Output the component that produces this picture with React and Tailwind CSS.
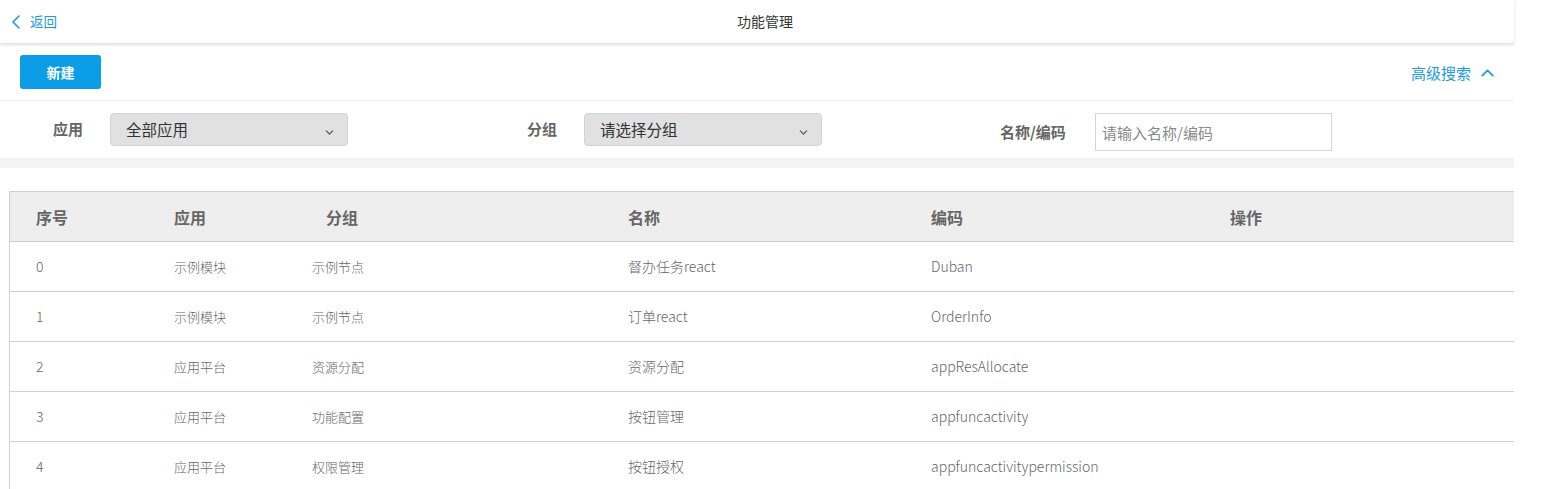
import React from 'react';

const rows = [
  { idx: '0', app: '示例模块', group: '示例节点', name: '督办任务react', code: 'Duban' },
  { idx: '1', app: '示例模块', group: '示例节点', name: '订单react', code: 'OrderInfo' },
  { idx: '2', app: '应用平台', group: '资源分配', name: '资源分配', code: 'appResAllocate' },
  { idx: '3', app: '应用平台', group: '功能配置', name: '按钮管理', code: 'appfuncactivity' },
  { idx: '4', app: '应用平台', group: '权限管理', name: '按钮授权', code: 'appfuncactivitypermission' },
];

const gridCols = 'grid grid-cols-[137px_152px_302px_303px_299px_1fr]';

function Chevron({ dir = 'down', className = '' }) {
  let d = 'M3 5l4 4 4-4';
  if (dir === 'up') d = 'M2 9l5-5 5 5';
  if (dir === 'left') d = 'M9 1L3 7l6 6';
  return (
    <svg viewBox="0 0 14 14" className={className} fill="none" stroke="currentColor" strokeWidth="1.6">
      <path d={d} strokeLinecap="round" strokeLinejoin="round" />
    </svg>
  );
}

function Select({ value }) {
  return (
    <div className="w-[238px] h-[33px] bg-[#e1e1e1] border border-[#d4d4d4] rounded-[4px] flex items-center justify-between pl-[15px] pr-[12px]">
      <span className="text-[15.5px] text-[#333]">{value}</span>
      <Chevron className="w-[11px] h-[11px] text-[#555] mt-[5px]" />
    </div>
  );
}

export default function App() {
  return (
    <div className="w-[1514px] bg-white text-[#333]" style={{ fontFamily: '"Noto Sans CJK SC", "Noto Sans", sans-serif' }}>
      {/* header */}
      <div className="h-[44px] flex items-center relative shadow-[0_1px_3px_rgba(0,0,0,0.12)] border-b border-[#e4e4e4]">
        <div className="flex items-center pl-[10px] text-[#1c9be4] text-[13.5px] gap-[6px]">
          <Chevron dir="left" className="w-[14px] h-[16px]" />
          <span>返回</span>
        </div>
        <div className="absolute left-0 right-0 flex justify-center pl-[16px] text-[14px] text-[#333] pointer-events-none">功能管理</div>
      </div>

      {/* toolbar */}
      <div className="h-[57px] flex items-center justify-between pl-[20px] pr-[19px] border-b border-[#ececec]">
        <button className="w-[81px] h-[34px] bg-[#0b9de6] text-white text-[14px] font-bold rounded-[3px]">新建</button>
        <div className="flex items-center gap-[9px] text-[#1c9be4] text-[15px] pt-[2px]">
          <span>高级搜索</span>
          <Chevron dir="up" className="w-[15px] h-[15px]" />
        </div>
      </div>

      {/* filters */}
      <div className="h-[57px] flex items-center">
        <div className="flex items-center">
          <span className="w-[110px] pl-[53px] text-[15px] font-bold text-[#666]">应用</span>
          <Select value="全部应用" />
        </div>
        <div className="flex items-center ml-[179px]">
          <span className="w-[57px] text-[15px] font-bold text-[#666]">分组</span>
          <Select value="请选择分组" />
        </div>
        <div className="flex items-center ml-[178px] pt-[5px]">
          <span className="w-[95px] text-[15px] font-bold text-[#666]">名称/编码</span>
          <input
            className="w-[237px] h-[38px] border border-[#d5d5d5] px-[6px] text-[15px] placeholder:text-[#888] outline-none"
            placeholder="请输入名称/编码"
          />
        </div>
      </div>

      <div className="h-[10px] bg-[#f3f3f3]" />

      {/* table */}
      <div className="pt-[23px] pl-[9px]">
        <div className="border-l border-[#d0d0d0]">
          <div className={`${gridCols} h-[51px] items-center bg-[#eeeeee] border-y border-[#cfcfcf] text-[16px] font-bold text-[#666]`}>
            <div className="pl-[26px]">序号</div>
            <div className="pl-[27px]">应用</div>
            <div className="pl-[27px]">分组</div>
            <div className="pl-[27px]">名称</div>
            <div className="pl-[27px]">编码</div>
            <div className="pl-[27px]">操作</div>
          </div>
          {rows.map((r) => (
            <div key={r.idx} className={`${gridCols} h-[50px] items-center border-b border-[#d0d0d0] text-[14px] text-[#666] font-light`}>
              <div className="pl-[26px]">{r.idx}</div>
              <div className="pl-[27px] text-[13px]">{r.app}</div>
              <div className="pl-[13px] text-[13px]">{r.group}</div>
              <div className="pl-[27px]">{r.name}</div>
              <div className="pl-[27px]">{r.code}</div>
              <div />
            </div>
          ))}
        </div>
      </div>
    </div>
  );
}
